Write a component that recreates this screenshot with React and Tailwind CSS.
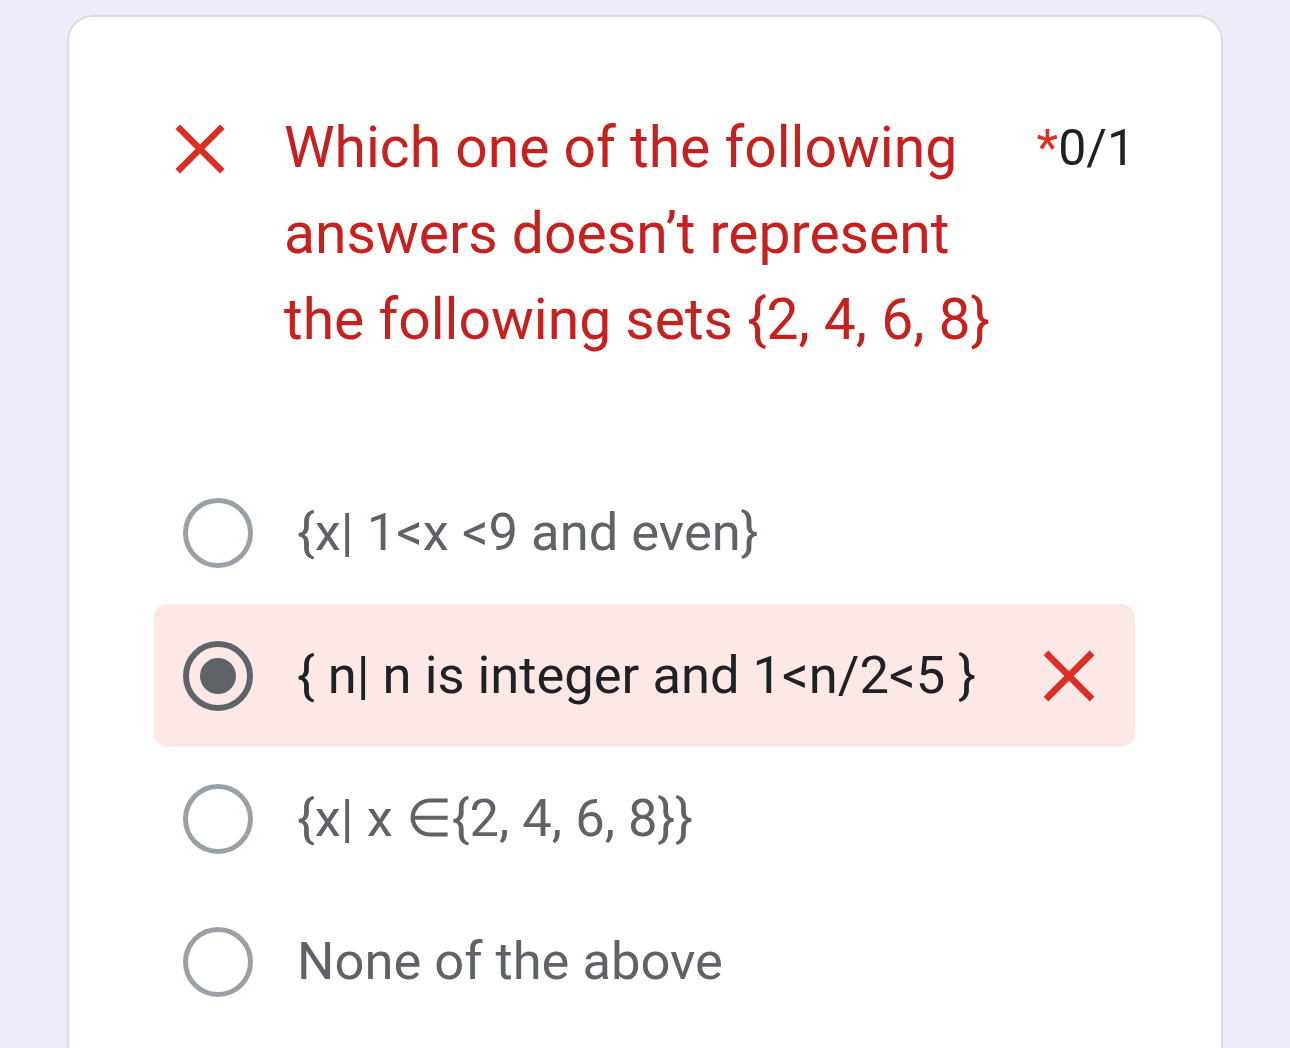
const options = [
  { label: "{x| 1<x <9 and even}", selected: false },
  { label: "{ n| n is integer and 1<n/2<5 }", selected: true, wrong: true },
  { label: "{x| x \u2208{2, 4, 6, 8}}", selected: false },
  { label: "None of the above", selected: false },
];

function CrossIcon({ className }) {
  return (
    <svg viewBox="0 0 24 24" className={className} fill="none" stroke="currentColor" strokeWidth="2.6" strokeLinecap="square">
      <path d="M4 4L20 20M20 4L4 20" />
    </svg>
  );
}

function Radio({ selected }) {
  if (selected) {
    return (
      <div className="flex h-[70px] w-[70px] shrink-0 items-center justify-center rounded-full border-[6px] border-[#5f6368]">
        <div className="h-[36px] w-[36px] rounded-full bg-[#5f6368]" />
      </div>
    );
  }
  return <div className="h-[70px] w-[70px] shrink-0 rounded-full border-[5px] border-[#9aa0a6]" />;
}

export default function App() {
  return (
    <div className="min-h-screen overflow-hidden bg-[#efebf8] pt-[15px]" style={{ fontFamily: "Roboto, 'Noto Sans', sans-serif" }}>
      <div className="mx-[67px] h-[1100px] rounded-[26px] border-2 border-[#dadce0] bg-white pl-[85px] pr-[86px] pt-[88px]">
        {/* Question header */}
        <div className="flex items-start pl-[16px]">
          <CrossIcon className="mt-[14px] h-[60px] w-[60px] shrink-0 text-[#d93025]" />
          <h2 className="ml-[54px] flex-1 text-[57px] leading-[86px] text-[#c5221f]">
            Which one of the following
            <br />
            answers doesn’t represent
            <br />
            the following sets {"{"}2, 4, 6, 8{"}"}
          </h2>
          <div className="text-[50px] leading-[86px] text-[#202124]">
            <span className="text-[#d93025]">*</span>0/1
          </div>
        </div>

        {/* Options */}
        <div className="mt-[98px] flex flex-col">
          {options.map((opt) => (
            <div
              key={opt.label}
              className={
                "flex h-[143px] items-center rounded-[14px] px-[29px] " +
                (opt.wrong ? "bg-[#fce8e6]" : "")
              }
            >
              <Radio selected={opt.selected} />
              <span
                className={
                  "ml-[44px] text-[52.5px] " + (opt.selected ? "text-[#202124]" : "text-[#5f6368]")
                }
              >
                {opt.label}
              </span>
              {opt.wrong && <CrossIcon className="ml-[62px] h-[62px] w-[62px] text-[#d93025]" />}
            </div>
          ))}
        </div>
      </div>
    </div>
  );
}
